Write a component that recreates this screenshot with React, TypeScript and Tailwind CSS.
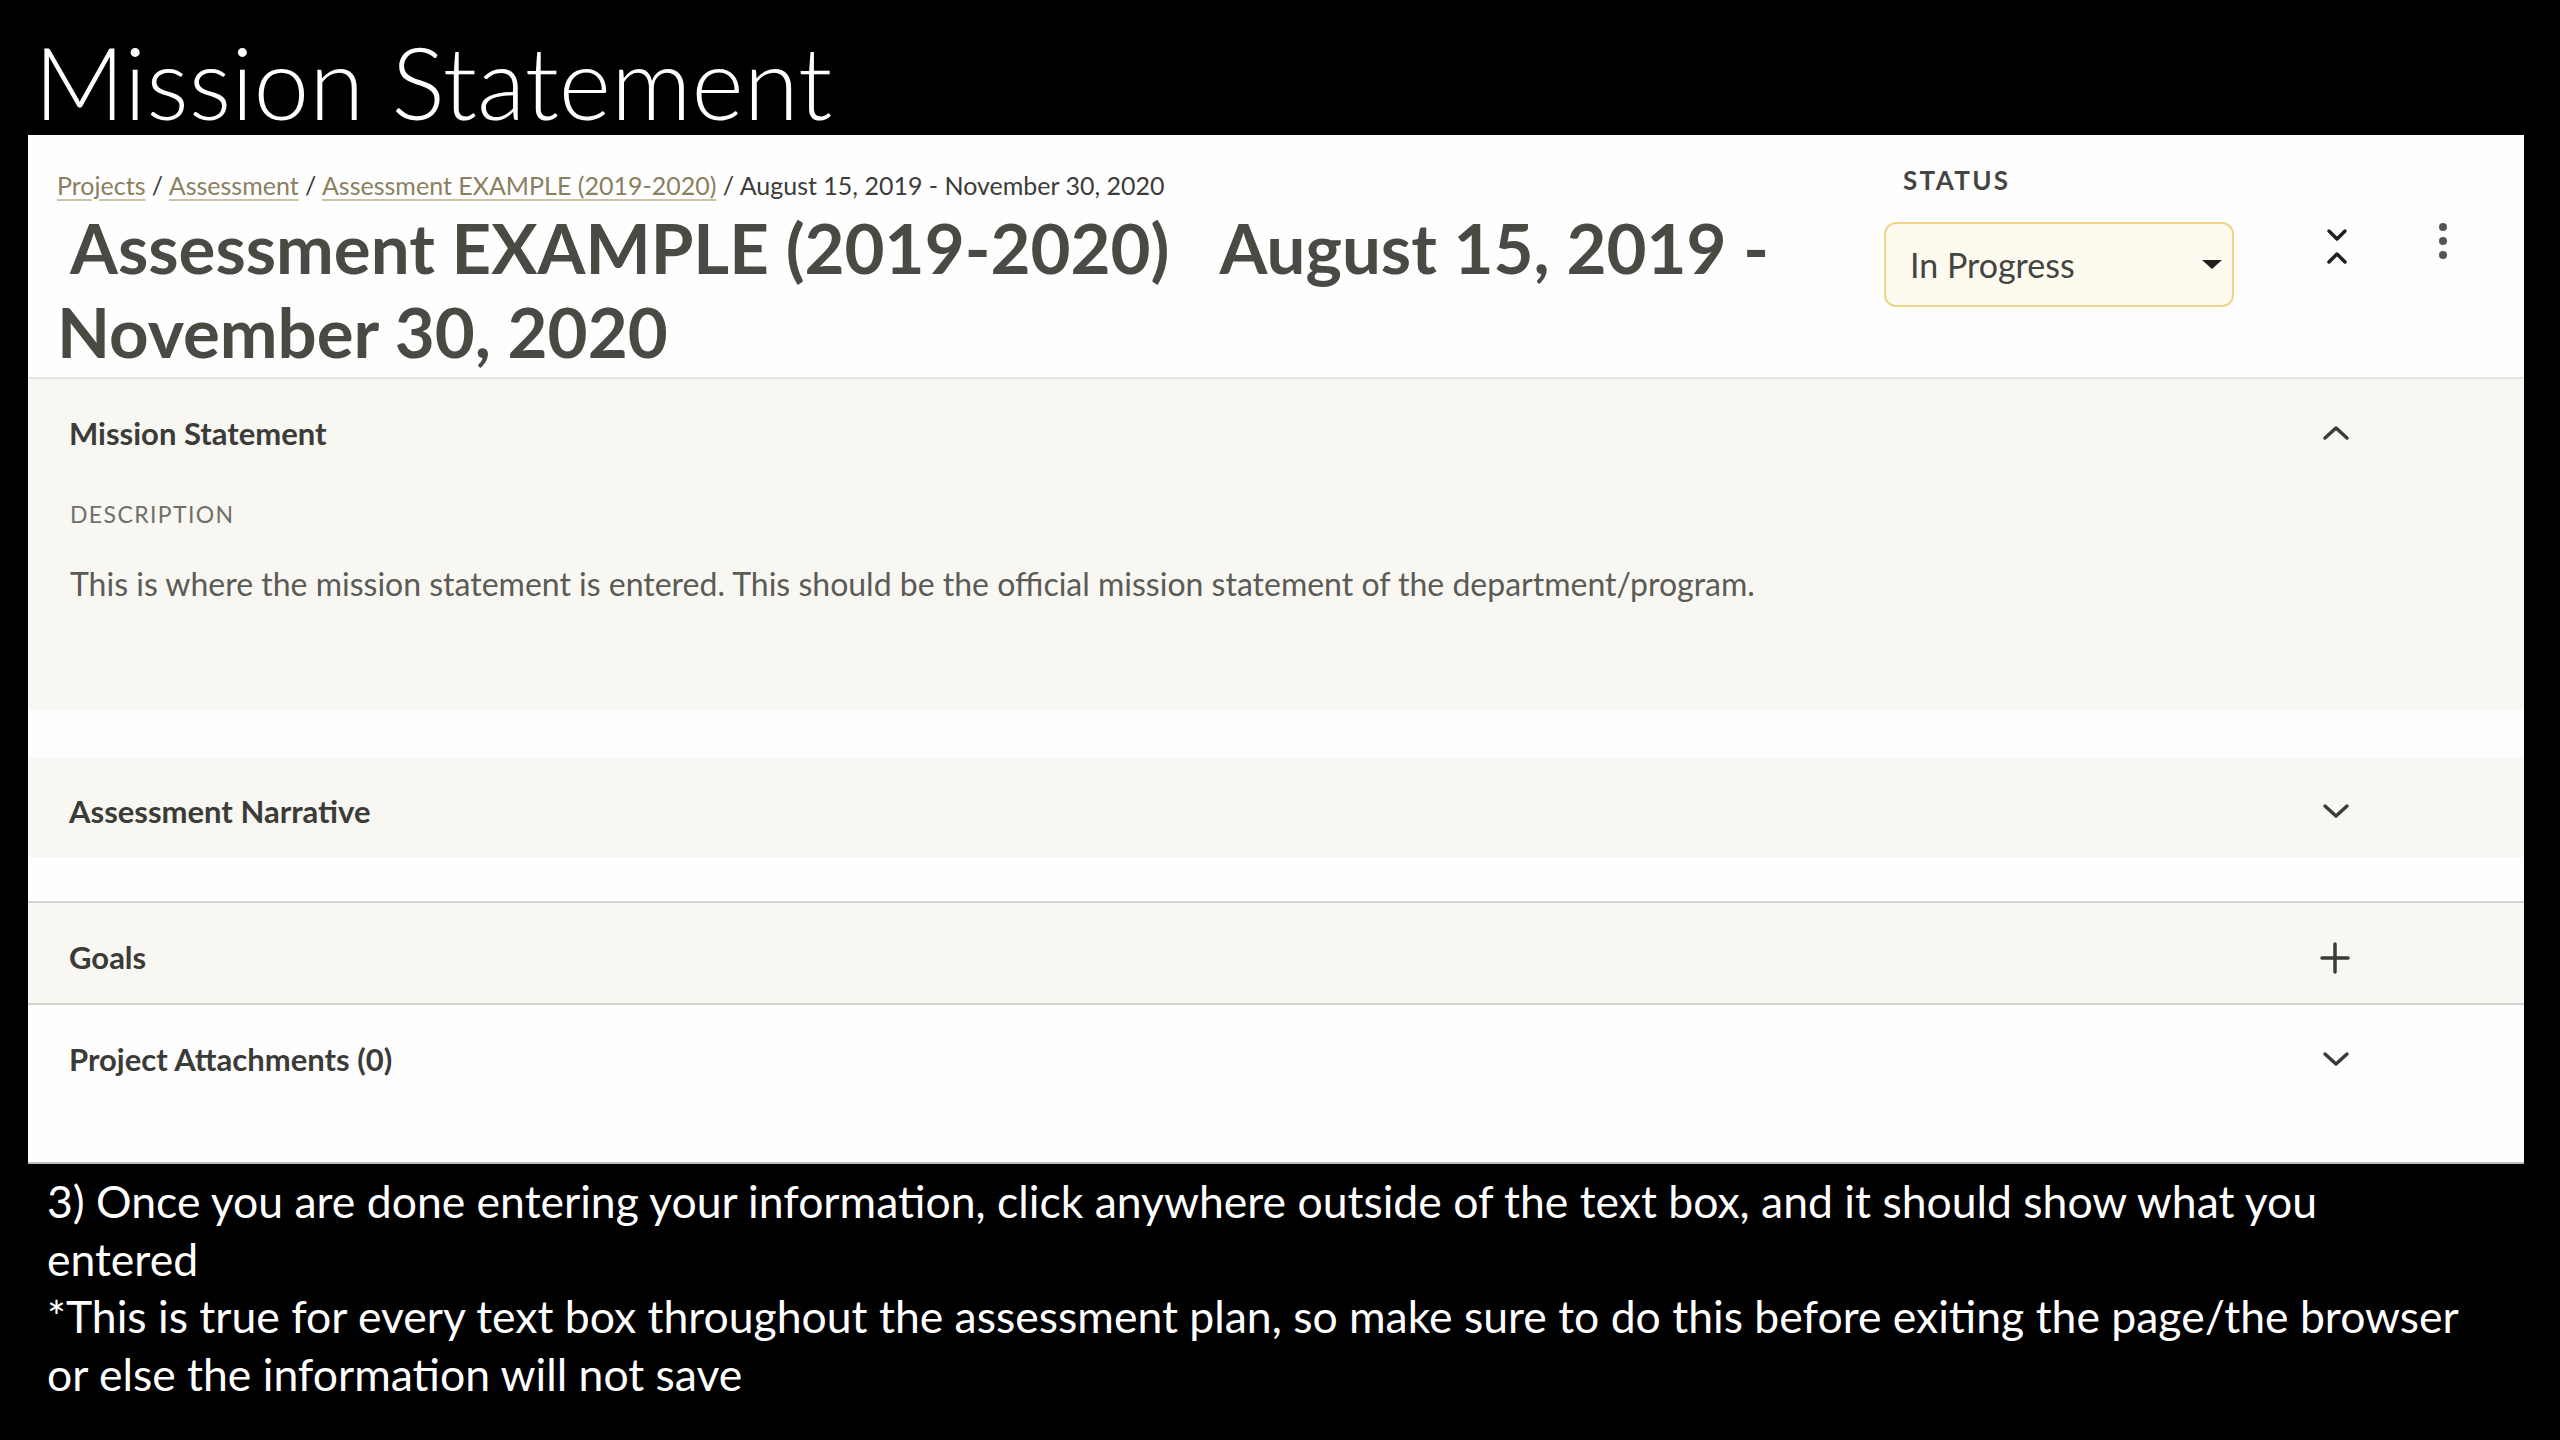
import React from "react";

function Chevron({ up = false }: { up?: boolean }) {
  return (
    <svg width="28" height="16" viewBox="0 0 28 16" fill="none" stroke="#3b3b38" strokeWidth="3.5" strokeLinecap="round" strokeLinejoin="round">
      <path d={up ? "M3 13 L14 3 L25 13" : "M3 3 L14 13 L25 3"} />
    </svg>
  );
}

function Plus() {
  return (
    <svg width="30" height="32" viewBox="0 0 30 32" fill="none" stroke="#3b3b38" strokeWidth="3.5" strokeLinecap="round">
      <path d="M15 2 V30 M2 16 H28" />
    </svg>
  );
}

function CollapseAll() {
  return (
    <svg width="22" height="37" viewBox="0 0 22 37" fill="none" stroke="#1f1f1f" strokeWidth="3.5" strokeLinecap="round" strokeLinejoin="round">
      <path d="M3 3 L11 11 L19 3" />
      <path d="M3 34 L11 26 L19 34" />
    </svg>
  );
}

function Kebab() {
  return (
    <div className="flex flex-col items-center gap-[6px]">
      <span className="w-[8px] h-[8px] rounded-full bg-[#555552]" />
      <span className="w-[8px] h-[8px] rounded-full bg-[#555552]" />
      <span className="w-[8px] h-[8px] rounded-full bg-[#555552]" />
    </div>
  );
}

function RowHead({ title, icon, h, pt }: { title: string; icon: React.ReactNode; h: string; pt: string }) {
  return (
    <div className={`flex items-center justify-between pl-[41px] pr-[174px] ${h} ${pt}`}>
      <span className="text-[31px] font-bold text-[#3b3b38] leading-none">{title}</span>
      {icon}
    </div>
  );
}

function Crumb({ children }: { children: React.ReactNode }) {
  return <span className="text-[#8b7f60] underline decoration-[#cbc2a8] underline-offset-[4px]">{children}</span>;
}

export default function App() {
  return (
    <div className="w-[2560px] h-[1440px] bg-black overflow-hidden font-['Lato',sans-serif]">
      <div className="h-[135px] pl-[34px] pt-[31px]">
        <h1 className="text-[100px] font-light leading-none text-white">Mission Statement</h1>
      </div>

      <div className="ml-[28px] w-[2496px] h-[1029px] bg-[#fefefe] flex flex-col border-b-2 border-[#bdbdbd]">
        {/* header */}
        <div className="flex h-[244px] border-b-2 border-[#e4e4e2]">
          <div className="w-[1856px] pl-[29px] pt-[35px]">
            <div className="text-[25px] leading-[30px] text-[#3c3c3a]">
              <Crumb>Projects</Crumb> / <Crumb>Assessment</Crumb> / <Crumb>Assessment EXAMPLE (2019-2020)</Crumb> / August 15, 2019 - November 30, 2020
            </div>
            <h2 className="mt-[6px] text-[69px] font-bold leading-[84px] text-[#4a4944] indent-[13px]">
              Assessment EXAMPLE (2019-2020)<span className="ml-[50px]">August 15, 2019 -</span>
              <br />
              November 30, 2020
            </h2>
          </div>
          <div className="w-[350px] pt-[33px]">
            <div className="pl-[19px] text-[26px] leading-[24px] font-bold tracking-[0.09em] text-[#454543]">STATUS</div>
            <div className="mt-[30px] h-[85px] rounded-[12px] border-2 border-[#f1d38a] bg-[#fdfaf0] flex items-center justify-between pl-[24px] pr-[10px]">
              <span className="text-[34px] text-[#444441]">In Progress</span>
              <svg width="20" height="9" viewBox="0 0 20 9">
                <path d="M0 0 H20 L10 9 Z" fill="#1f1f1f" />
              </svg>
            </div>
          </div>
          <div className="ml-[92px] pt-[93px]">
            <CollapseAll />
          </div>
          <div className="ml-[91px] pt-[88px]">
            <Kebab />
          </div>
        </div>

        {/* mission statement */}
        <div className="h-[331px] bg-[#f8f7f2]">
          <RowHead title="Mission Statement" icon={<Chevron up />} h="h-[108px]" pt="pt-0" />
          <div className="pl-[42px] mt-[15px] text-[23px] leading-[24px] tracking-[0.06em] text-[#6f6f6a]">DESCRIPTION</div>
          <div className="pl-[42px] mt-[38px] text-[32px] leading-[40px] text-[#5b5b56]">
            This is where the mission statement is entered. This should be the official mission statement of the department/program.
          </div>
        </div>

        <div className="h-[48px]" />

        <div className="h-[99px] bg-[#f8f7f2]">
          <RowHead title="Assessment Narrative" icon={<Chevron />} h="h-[99px]" pt="pt-[7px]" />
        </div>

        <div className="h-[46px] border-b-2 border-[#d2d2d0]" />

        <div className="h-[102px] bg-[#f8f7f2] border-b-2 border-[#d2d2d0]">
          <RowHead title="Goals" icon={<Plus />} h="h-[100px]" pt="pt-[9px]" />
        </div>

        <div className="flex-1">
          <RowHead title="Project Attachments (0)" icon={<Chevron />} h="h-[108px]" pt="pt-0" />
        </div>
      </div>

      <div className="pl-[47px] pt-[8px] text-[44.5px] leading-[57.5px] text-white">
        <div>3) Once you are done entering your information, click anywhere outside of the text box, and it should show what you</div>
        <div>entered</div>
        <div>*This is true for every text box throughout the assessment plan, so make sure to do this before exiting the page/the browser</div>
        <div>or else the information will not save</div>
      </div>
    </div>
  );
}
